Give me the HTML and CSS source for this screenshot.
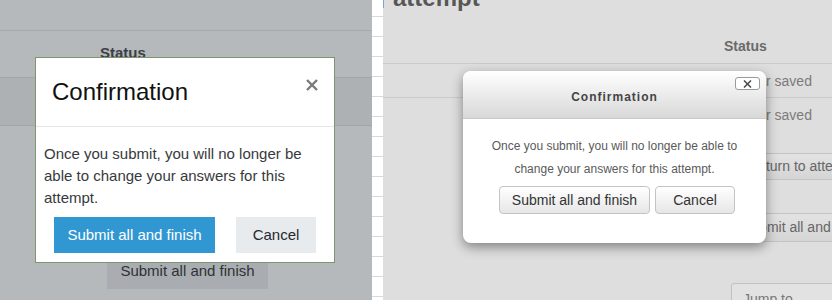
FILE: index.html
```html
<!DOCTYPE html>
<html lang="en">
<head>
<meta charset="utf-8">
<title>Confirmation dialogs</title>
<link rel="stylesheet" href="styles.css">
</head>
<body>
<div class="page">
  <section class="pane pane-left">
    <div class="l-row0"></div>
    <div class="l-head"><span class="l-status">Status</span></div>
    <div class="l-band"></div>
    <div class="l-under-btn">Submit all and finish</div>

    <div class="modal-a" role="dialog">
      <div class="ma-header">
        <h2 class="ma-title">Confirmation</h2>
        <span class="ma-close" aria-label="Close">
          <svg width="12" height="12" viewBox="0 0 12 12"><path d="M1 1 L11 11 M11 1 L1 11" stroke="#7a7a7a" stroke-width="2.4" stroke-linecap="butt"/></svg>
        </span>
      </div>
      <div class="ma-body">Once you submit, you will no longer be able to change your answers for this attempt.</div>
      <div class="ma-footer">
        <span class="ma-btn ma-primary">Submit all and finish</span>
        <span class="ma-btn ma-secondary">Cancel</span>
      </div>
    </div>
  </section>

  <div class="strip"></div>

  <section class="pane pane-right">
    <div class="r-headrow"><span class="r-bar"></span><h1 class="r-h1">attempt</h1></div>
    <div class="r-thead"><span class="r-status">Status</span></div>
    <div class="r-row r-row1">Answer saved</div>
    <div class="r-row r-row2">Answer saved</div>
    <div class="r-btn r-btn1">Return to attempt</div>
    <div class="r-btn r-btn2">Submit all and finish</div>
    <div class="r-select">Jump to...</div>

    <div class="modal-b" role="dialog">
      <div class="mb-header">
        <span class="mb-title">Confirmation</span>
        <span class="mb-close" aria-label="Close">
          <svg width="9" height="8" viewBox="0 0 9 8"><path d="M1 0.5 L8 7.5 M8 0.5 L1 7.5" stroke="#4a4a4a" stroke-width="1.5"/></svg>
        </span>
      </div>
      <div class="mb-body">Once you submit, you will no longer be able to change your answers for this attempt.</div>
      <div class="mb-footer">
        <span class="mb-btn mb-submit">Submit all and finish</span>
        <span class="mb-btn mb-cancel">Cancel</span>
      </div>
    </div>
  </section>
</div>
</body>
</html>
```
FILE: styles.css
```css
* { box-sizing: border-box; }
html, body { margin: 0; padding: 0; }
body {
  width: 832px;
  height: 300px;
  overflow: hidden;
  font-family: "Liberation Sans", Arial, sans-serif;
}
.page {
  display: flex;
  width: 832px;
  height: 300px;
}
.pane {
  position: relative;
  overflow: hidden;
  display: flex;
  flex-direction: column;
  align-items: flex-start;
}

/* ---------- left pane ---------- */
.pane-left {
  width: 372px;
  background: #b6b9bc;
}
.l-row0 {
  width: 100%;
  height: 31px;
  border-bottom: 1px solid #a6a9ac;
}
.l-head {
  width: 100%;
  padding: 12px 0 14px 100px;
  line-height: 20px;
}
.l-status {
  font-size: 15px;
  font-weight: bold;
  color: #3b4045;
}
.l-band {
  width: 100%;
  height: 49px;
  background: #aeb1b4;
  border-top: 1px solid #a3a6a9;
  border-bottom: 1px solid #a3a6a9;
}
.l-under-btn {
  margin: 127px 0 0 107px;
  width: 161px;
  height: 36px;
  line-height: 36px;
  text-align: center;
  background: #a9adb1;
  color: #2e3236;
  font-size: 15px;
}

.modal-a {
  position: absolute;
  left: 35px;
  top: 57px;
  width: 300px;
  background: #fff;
  border: 1px solid #7d9470;
}
.ma-header {
  display: flex;
  justify-content: space-between;
  align-items: flex-start;
  padding: 19px 16px 19px 16px;
  border-bottom: 1px solid #e6e6e6;
}
.ma-title {
  margin: 0;
  font-size: 24px;
  font-weight: normal;
  line-height: 30px;
  color: #111;
}
.ma-close {
  display: block;
  width: 12px;
  height: 12px;
  margin-top: 2px;
}
.ma-close svg { display: block; }
.ma-body {
  padding: 16px 8px 0 8px;
  font-size: 15px;
  line-height: 22px;
  color: #373a3c;
}
.ma-footer {
  display: flex;
  justify-content: space-between;
  padding: 8px 18px 9px 18px;
}
.ma-btn {
  display: block;
  height: 36px;
  line-height: 36px;
  font-size: 15px;
  text-align: center;
}
.ma-primary {
  width: 161px;
  background: #3097d2;
  color: #fff;
}
.ma-secondary {
  width: 80px;
  background: #e8ebee;
  color: #25292d;
}

/* ---------- strip ---------- */
.strip {
  width: 11px;
  height: 300px;
  background-color: #fff;
  background-image: repeating-linear-gradient(to bottom, #ffffff 0, #ffffff 19px, #d9d9d9 19px, #d9d9d9 20px);
  background-position: 0 -3px;
}

/* ---------- right pane ---------- */
.pane-right {
  flex: 1;
  background: #dedede;
}
.r-headrow {
  display: flex;
  align-items: flex-start;
  height: 10px;
}
.r-bar {
  display: block;
  width: 1px;
  height: 8px;
  background: #8aa0c6;
}
.r-h1 {
  margin: -14px 0 0 9px;
  font-size: 24px;
  line-height: 24px;
  font-weight: bold;
  color: #575757;
}
.r-thead {
  width: 100%;
  padding: 26px 0 7px 341px;
  line-height: 20px;
  border-bottom: 1px solid #cacaca;
}
.r-status {
  font-size: 14px;
  font-weight: bold;
  color: #6a6a6a;
}
.r-row {
  width: 100%;
  padding-left: 341px;
  font-size: 14px;
  line-height: 20px;
  color: #7b7b7b;
}
.r-row1 {
  padding-top: 7px;
  padding-bottom: 6px;
  border-bottom: 1px solid #cacaca;
}
.r-row2 {
  padding-top: 7px;
  padding-bottom: 8px;
}
.r-btn {
  font-size: 14px;
  line-height: 17px;
  padding: 4px 12px;
  white-space: nowrap;
  color: #666;
  background: linear-gradient(#e3e3e3, #d5d5d5);
  border: 1px solid #c3c3c3;
  border-radius: 3px;
}
.r-btn1 {
  margin: 20px 0 0 352px;
}
.r-btn2 {
  margin: 33px 0 0 346px;
  padding: 5px 12px;
}
.r-select {
  margin: 41px 0 0 348px;
  width: 140px;
  height: 30px;
  padding: 6px 11px;
  font-size: 14px;
  line-height: 18px;
  color: #777;
  background: #e2e2e2;
  border: 1px solid #c2c2c2;
  border-radius: 3px;
}

.modal-b {
  position: absolute;
  left: 80px;
  top: 71px;
  width: 303px;
  height: 172px;
  background: #fff;
  border-radius: 8px;
  box-shadow: 0 4px 12px rgba(0, 0, 0, 0.42);
}
.mb-header {
  position: relative;
  height: 48px;
  padding-top: 16px;
  text-align: center;
  border-bottom: 1px solid #c9c9c9;
  border-radius: 8px 8px 0 0;
  background: linear-gradient(#ffffff, #d8d8d8);
}
.mb-title {
  font-size: 12px;
  line-height: 16px;
  font-weight: bold;
  letter-spacing: 1px;
  color: #444;
}
.mb-close {
  position: absolute;
  left: 272px;
  top: 6px;
  width: 25px;
  height: 13px;
  display: flex;
  align-items: center;
  justify-content: center;
  background: #fff;
  border: 1px solid #9a9a9a;
  border-radius: 3px;
}
.mb-close svg { display: block; }
.mb-body {
  padding: 16px 20px 0 20px;
  text-align: center;
  font-size: 12px;
  line-height: 23px;
  color: #5a5a5a;
}
.mb-footer {
  display: flex;
  justify-content: center;
  gap: 5px;
  margin-top: 5px;
  padding-left: 5px;
}
.mb-btn {
  display: block;
  height: 28px;
  line-height: 26px;
  font-size: 14px;
  color: #333;
  text-align: center;
  background: linear-gradient(#ffffff, #e6e6e6);
  border: 1px solid #c4c4c4;
  border-radius: 4px;
}
.mb-submit { width: 151px; }
.mb-cancel { width: 80px; }
```
